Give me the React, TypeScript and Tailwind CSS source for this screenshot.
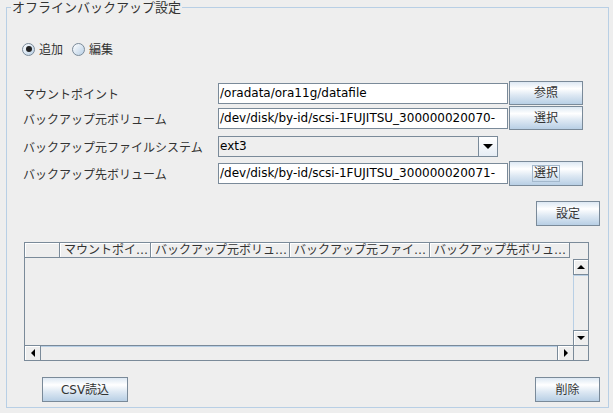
import React from 'react';

const font = "font-['DejaVu_Sans','Noto_Sans_CJK_JP',sans-serif]";
const btn =
  'flex items-center justify-center border border-[#7a8a99] bg-[linear-gradient(to_bottom,#dde8f3_0%,#ffffff_30%,#dde8f3_60%,#b8cfe5_100%)] text-[12px] text-[#333333]';
const label = 'w-[195px] shrink-0 pt-[3px] text-[12px] text-[#333333]';

function Radio({ checked, label }: { checked: boolean; label: string }) {
  return (
    <div className="flex items-center">
      <div className="w-[13px] h-[13px] rounded-full border border-[#7a8a99] bg-[linear-gradient(135deg,#ffffff,#b8cfe5)] flex items-center justify-center">
        {checked && <div className="w-[6px] h-[6px] rounded-full bg-[#222222]" />}
      </div>
      <span className="ml-[4px] pt-[2px] text-[12px] leading-[16px] text-[#333333]">{label}</span>
    </div>
  );
}

function Field({ value }: { value: string }) {
  return (
    <div className="w-[290px] h-[21px] border border-[#7a8a99] bg-white overflow-hidden whitespace-nowrap pl-[1px] text-[12px] leading-[19px] text-black">
      {value}
    </div>
  );
}

function Arrow({ dir, size = 8 }: { dir: 'up' | 'down' | 'left' | 'right'; size?: number }) {
  const h = size / 2;
  const pts = {
    up: `0,${h} ${size},${h} ${h},0`,
    down: `0,0 ${size},0 ${h},${h}`,
    left: `${h},0 ${h},${size} 0,${h}`,
    right: `0,0 0,${size} ${h},${h}`,
  }[dir];
  const vertical = dir === 'up' || dir === 'down';
  return (
    <svg width={vertical ? size : h} height={vertical ? h : size} viewBox={vertical ? `0 0 ${size} ${h}` : `0 0 ${h} ${size}`}>
      <polygon points={pts} fill="#000000" />
    </svg>
  );
}

export default function App() {
  const rows = [
    { label: 'マウントポイント', value: '/oradata/ora11g/datafile', button: '参照' },
    { label: 'バックアップ元ボリューム', value: '/dev/disk/by-id/scsi-1FUJITSU_300000020070-', button: '選択' },
  ];
  const headers = [
    { w: 'w-[35px]', t: '' },
    { w: 'w-[91px]', t: 'マウントポイ…' },
    { w: 'w-[139px]', t: 'バックアップ元ボリュ…' },
    { w: 'w-[140px]', t: 'バックアップ元ファイ…' },
    { w: 'w-[140px]', t: 'バックアップ先ボリュ…' },
  ];

  return (
    <div className={`w-[613px] h-[413px] bg-[#eeeeee] pt-[7px] pl-[6px] ${font}`}>
      <div className="relative w-[603px] h-[401px] border border-[#b8cfe5] flex flex-col">
        <span className="absolute left-[4px] top-[-8px] px-[1px] bg-[#eeeeee] text-[13px] leading-[16px] text-[#333333]">
          オフラインバックアップ設定
        </span>

        {/* 追加 / 編集 */}
        <div className="mt-[32px] ml-[15px] flex items-center gap-[9px]">
          <Radio checked label="追加" />
          <Radio checked={false} label="編集" />
        </div>

        {/* 入力フォーム */}
        <div className="mt-[23px] ml-[16px] flex flex-col">
          {rows.map((r, i) => (
            <div key={r.label} className={`flex items-center h-[24px] ${i === 1 ? 'mt-[1px]' : ''}`}>
              <div className={label}>{r.label}</div>
              <Field value={r.value} />
              <div className={`${btn} ml-[1px] w-[74px] h-[24px]`}>{r.button}</div>
            </div>
          ))}
          <div className="flex items-center h-[24px] mt-[4px]">
            <div className={label}>バックアップ元ファイルシステム</div>
            <div className="w-[280px] h-[21px] border border-[#7a8a99] bg-[#eeeeee] flex">
              <div className="flex-1 pl-[1px] text-[12px] leading-[19px] text-black">ext3</div>
              <div className="w-[19px] border-l border-[#7a8a99] bg-[linear-gradient(to_bottom,#ffffff,#e6edf5)] flex items-center justify-center">
                <Arrow dir="down" size={10} />
              </div>
            </div>
          </div>
          <div className="flex items-center h-[25px] mt-[3px]">
            <div className={label}>バックアップ先ボリューム</div>
            <Field value="/dev/disk/by-id/scsi-1FUJITSU_300000020071-" />
            <div className={`${btn} ml-[1px] w-[74px] h-[25px]`}>
              <span className="border border-[#a3b8cc] px-[1px] leading-[15px]">選択</span>
            </div>
          </div>
        </div>

        <div className={`${btn} self-end mt-[15px] mr-[8px] w-[64px] h-[25px]`}>設定</div>

        {/* 一覧テーブル */}
        <div className="mt-[16px] ml-[17px] w-[565px] h-[119px] border border-[#7a8a99] grid grid-cols-[1fr_15px] grid-rows-[1fr_15px] bg-[#eeeeee]">
          <div className="flex flex-col">
            <div className="flex h-[15px]">
              {headers.map((h, i) => (
                <div
                  key={i}
                  className={`${h.w} h-[15px] border-r border-b border-[#7a8a99] shadow-[inset_1px_1px_0_#ffffff] pl-[4px] text-[12px] leading-[15px] text-[#333333] overflow-hidden whitespace-nowrap`}
                >
                  {h.t}
                </div>
              ))}
            </div>
            <div className="flex-1" />
          </div>
          <div className="flex flex-col">
            <div className="h-[16px]" />
            <div className="h-[16px] border-l border-b border-t border-[#7a8a99] bg-[#eeeeee] shadow-[inset_1px_1px_0_#ffffff] flex items-center justify-center">
              <Arrow dir="up" />
            </div>
            <div className="flex-1 border-l border-[#b8cfe5] border-t-[1px] border-t-[#b8cfe5]" />
            <div className="h-[15px] border-l border-t border-[#7a8a99] bg-[#eeeeee] shadow-[inset_1px_1px_0_#ffffff] flex items-center justify-center">
              <Arrow dir="down" />
            </div>
          </div>
          <div className="flex border-t border-[#7a8a99]">
            <div className="w-[16px] border-r border-[#7a8a99] shadow-[inset_1px_1px_0_#ffffff] flex items-center justify-center">
              <Arrow dir="left" />
            </div>
            <div className="flex-1 border-t border-[#b8cfe5]" />
            <div className="w-[16px] border-l border-[#7a8a99] shadow-[inset_1px_1px_0_#ffffff] flex items-center justify-center">
              <Arrow dir="right" />
            </div>
          </div>
          <div className="border-t border-l border-[#7a8a99]" />
        </div>

        {/* 下部ボタン */}
        <div className="mt-[16px] flex justify-between">
          <div className={`${btn} ml-[35px] w-[86px] h-[25px]`}>CSV読込</div>
          <div className={`${btn} mr-[8px] w-[65px] h-[25px]`}>削除</div>
        </div>
      </div>
    </div>
  );
}
